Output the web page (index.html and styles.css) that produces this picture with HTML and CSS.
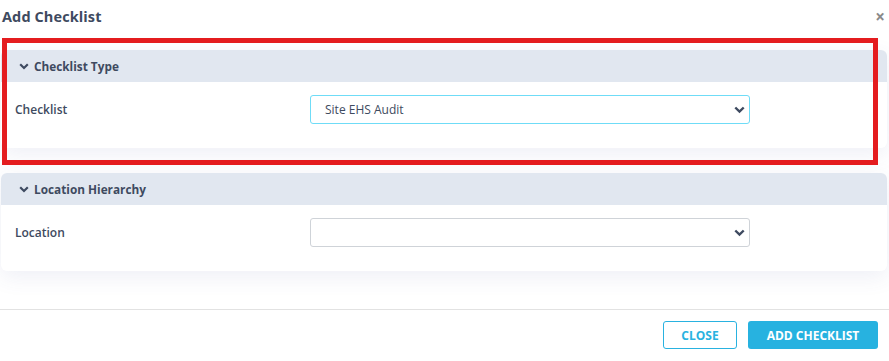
FILE: index.html
```html
<!DOCTYPE html>
<html>
    <head>
        <meta charset="UTF-8">
        <title>Add Checklist</title>
        <link rel="stylesheet" href="styles.css">
    </head>
    <body>
        <div class="modal">
            <div class="modal-header">
                <div class="modal-title">Add Checklist</div>
                <div class="modal-close">&times;</div>
            </div>
            <div class="modal-body">
                <div class="card">
                    <div class="card-head">
                        <svg class="chev" width="10" height="7" viewBox="0 0 10 7"><path d="M1.2 1.3 L5 5 L8.8 1.3" fill="none" stroke="#3e4a60" stroke-width="2.2"/></svg>
                        <span>Checklist Type</span>
                    </div>
                    <div class="card-row">
                        <div class="row-label">Checklist</div>
                        <div class="select focus">
                            <span>Site EHS Audit</span>
                            <svg width="11" height="8" viewBox="0 0 11 8"><path d="M1.3 1.5 L5.5 5.6 L9.7 1.5" fill="none" stroke="#3e4a60" stroke-width="2.4"/></svg>
                        </div>
                    </div>
                </div>
                <div class="card">
                    <div class="card-head">
                        <svg class="chev" width="10" height="7" viewBox="0 0 10 7"><path d="M1.2 1.3 L5 5 L8.8 1.3" fill="none" stroke="#3e4a60" stroke-width="2.2"/></svg>
                        <span>Location Hierarchy</span>
                    </div>
                    <div class="card-row">
                        <div class="row-label">Location</div>
                        <div class="select">
                            <span></span>
                            <svg width="11" height="8" viewBox="0 0 11 8"><path d="M1.3 1.5 L5.5 5.6 L9.7 1.5" fill="none" stroke="#3e4a60" stroke-width="2.4"/></svg>
                        </div>
                    </div>
                </div>
            </div>
            <div class="modal-footer">
                <button class="btn btn-outline">CLOSE</button>
                <button class="btn btn-primary">ADD CHECKLIST</button>
            </div>
            <div class="highlight"></div>
        </div>
    </body>
</html>
```

FILE: styles.css
```css
body {
    margin: 0;
    background: #fff;
    font-family: "Open Sans", "DejaVu Sans", sans-serif;
    color: #3e4a60;
}

.modal {
    position: relative;
    width: 889px;
    height: 361px;
    display: flex;
    flex-direction: column;
    overflow: hidden;
}

.modal-header {
    height: 35px;
    display: flex;
    align-items: center;
    justify-content: space-between;
    padding: 0 4px 2px 2px;
    box-sizing: border-box;
}

.modal-title {
    font-size: 14.5px;
    font-weight: 700;
    letter-spacing: 0.1px;
}

.modal-close {
    font-size: 17px;
    font-weight: 700;
    color: #8a8a8a;
    line-height: 1;
}

.modal-body {
    height: 274px;
    box-sizing: border-box;
    padding: 15px 2px 0 1px;
    display: flex;
    flex-direction: column;
    gap: 25px;
}

.card {
    background: #fff;
    border-radius: 6px;
    box-shadow: 0 6px 22px rgba(70, 80, 160, 0.09);
}

.card-head {
    height: 32px;
    background: #e1e7f0;
    border-radius: 6px 6px 0 0;
    display: flex;
    align-items: center;
    gap: 5px;
    padding-left: 18px;
    font-size: 11.8px;
    font-weight: 700;
}

.card-head .chev {
    margin-top: 1px;
}

.card-row {
    display: flex;
    align-items: center;
    padding: 13px 0 24px 14px;
}

.row-label {
    width: 295px;
    font-size: 12px;
    font-weight: 600;
}

.select {
    width: 440px;
    height: 29px;
    box-sizing: border-box;
    border: 1px solid #cfd3d8;
    border-radius: 3px;
    display: flex;
    align-items: center;
    justify-content: space-between;
    padding: 0 4px 0 14px;
    font-size: 12px;
}

.select.focus {
    border-color: #6fdcf7;
}

.modal-footer {
    flex: 1;
    border-top: 1px solid #e2e2e2;
    display: flex;
    justify-content: flex-end;
    align-items: flex-start;
    gap: 11px;
    padding: 11px 11px 0 0;
}

.btn {
    height: 28px;
    border-radius: 3px;
    font-family: "Open Sans", "DejaVu Sans", sans-serif;
    font-size: 12px;
    font-weight: 700;
    padding: 0;
}

.btn-outline {
    width: 74px;
    background: #fff;
    border: 1px solid #29b2e0;
    color: #29b2e0;
}

.btn-primary {
    width: 130px;
    background: #27b2e0;
    border: none;
    color: #fff;
}

.highlight {
    position: absolute;
    left: 2px;
    top: 38px;
    width: 876px;
    height: 127px;
    box-sizing: border-box;
    border: 5px solid #e41c1f;
}
```
